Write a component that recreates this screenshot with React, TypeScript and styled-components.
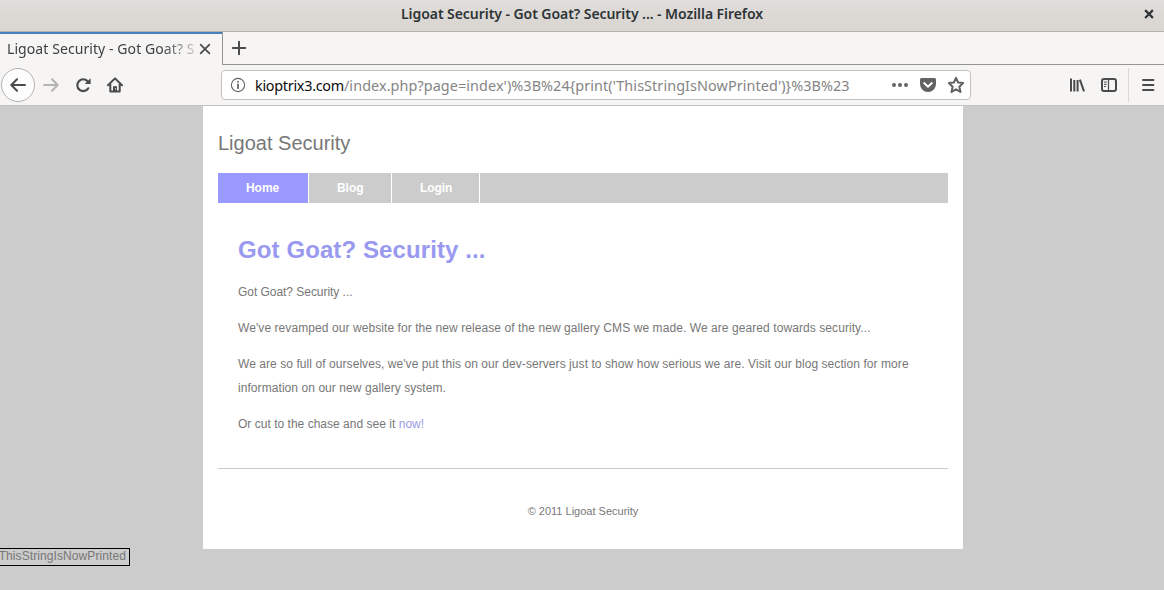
import React from "react";
import styled, { createGlobalStyle } from "styled-components";

const GlobalStyle = createGlobalStyle`
  * { box-sizing: border-box; }
  html, body { margin: 0; padding: 0; }
  body { background: #cccccc; overflow: hidden; }
`;

const Window = styled.div`
  display: flex;
  flex-direction: column;
  width: 1164px;
  height: 590px;
  overflow: hidden;
  background: #cccccc;
  font-family: "Noto Sans", sans-serif;
`;

const TitleBar = styled.header`
  display: flex;
  align-items: center;
  height: 32px;
  padding: 0 10px 4px 401px;
  background: linear-gradient(#e0ddda, #d9d5d1);
  border-bottom: 1px solid #b8b2ac;
`;

const WindowTitle = styled.span`
  flex: 1;
  color: #2e3436;
  font-size: 14px;
  font-weight: 600;
  line-height: 20px;
  letter-spacing: -0.06px;
  white-space: pre;
`;

const TabStrip = styled.div`
  display: flex;
  height: 33px;
  background: #f6f5f4;
`;

const Tab = styled.div`
  display: flex;
  align-items: center;
  width: 222px;
  padding: 0 10px 2px 7px;
  border-top: 2px solid #4a7fbf;
`;

const TabTitle = styled.span`
  width: 188px;
  color: #3b3f40;
  font-size: 14px;
  line-height: 20px;
  letter-spacing: 0.08px;
  white-space: nowrap;
  mask-image: linear-gradient(to right, #000 155px, transparent 198px);
`;

const TabClose = styled.span`
  display: flex;
  margin-left: 3px;
`;

const TabRest = styled.div`
  flex: 1;
  display: flex;
  align-items: center;
  padding-left: 8px;
  border-left: 1px solid #929594;
  border-bottom: 1px solid #929594;
`;

const Toolbar = styled.div`
  display: flex;
  align-items: center;
  height: 41px;
  padding-left: 1px;
  background: #f6f5f4;
  border-bottom: 1px solid #c4c2bf;
`;

const BackButton = styled.div`
  display: flex;
  align-items: center;
  justify-content: center;
  width: 34px;
  height: 34px;
  background: #fdfdfd;
  border: 1px solid #b3b2b0;
  border-radius: 50%;
`;

const ToolIcon = styled.div<{ $gap: number }>`
  display: flex;
  margin-left: ${(p) => p.$gap}px;
`;

const UrlBar = styled.div`
  display: flex;
  align-items: center;
  width: 750px;
  height: 30px;
  margin-left: 98px;
  padding: 0 5px 0 8px;
  background: #fff;
  border: 1px solid #c4c2c0;
  border-radius: 4px;
`;

const Url = styled.span`
  flex: 1;
  margin-left: 9px;
  padding-top: 1px;
  color: #858585;
  font-size: 14.4px;
  line-height: 20px;
  letter-spacing: 0.08px;
  white-space: nowrap;
`;

const Domain = styled.span`
  color: #0c0c0d;
  letter-spacing: -0.28px;
`;

const Separator = styled.div`
  width: 1px;
  height: 34px;
  margin-left: 11px;
  background: #dad8d6;
`;

const Viewport = styled.main`
  flex: 1;
  color: #777777;
  font-family: "Liberation Sans", Arial, sans-serif;
  font-size: 12px;
  line-height: 24px;
`;

const Page = styled.div`
  width: 760px;
  height: 443px;
  margin-left: 203px;
  padding: 22px 15px 0;
  background: #fff;
`;

const SiteName = styled.div`
  height: 45px;
  font-size: 20px;
  line-height: 30px;
`;

const Nav = styled.nav`
  display: flex;
  height: 30px;
  background: #cccccc;
`;

const NavItem = styled.a<{ $width: number; $active?: boolean }>`
  width: ${(p) => p.$width}px;
  padding-left: 28px;
  color: #fff;
  background: ${(p) => (p.$active ? "#9999ff" : "#cccccc")};
  border-right: 1px solid #fff;
  font-weight: bold;
  line-height: 30px;
  letter-spacing: -0.05px;
`;

const Article = styled.section`
  height: 266px;
  padding: 32px 20px 0;
  border-bottom: 1px solid #cccccc;
`;

const Heading = styled.h1`
  margin: 0 0 15px;
  color: #9999f0;
  font-size: 24px;
  line-height: 30px;
  letter-spacing: 0.1px;
`;

const Paragraph = styled.p<{ $tracking: number }>`
  margin: 0 0 12px;
  letter-spacing: ${(p) => p.$tracking}px;
`;

const Link = styled.a`
  color: #9c9ae6;
`;

const Footer = styled.footer`
  padding-top: 30px;
  font-size: 11px;
  text-align: center;
`;

const Printed = styled.div`
  display: flex;
  justify-content: flex-end;
  width: 130px;
  height: 18px;
  margin-top: -1px;
  padding-right: 3px;
  border: 1px solid #000;
  border-left: 0;
  line-height: 15px;
  letter-spacing: 0.09px;
  white-space: nowrap;
`;

const Stroke = ({ size = 16, width = 2, color = "#4a4b4c", children }: {
  size?: number; width?: number; color?: string; children: React.ReactNode;
}) => (
  <svg width={size} height={size} viewBox="0 0 16 16" fill="none" stroke={color}
    strokeWidth={width} strokeLinecap="round" strokeLinejoin="round">
    {children}
  </svg>
);

const paragraphs = [
  { text: "Got Goat? Security ...", tracking: -0.04 },
  { text: "We've revamped our website for the new release of the new gallery CMS we made. We are geared towards security...", tracking: 0.077 },
  { text: "We are so full of ourselves, we've put this on our dev-servers just to show how serious we are. Visit our blog section for more information on our new gallery system.", tracking: 0.067 },
];

export default function App() {
  return (
    <Window>
      <GlobalStyle />
      <TitleBar>
        <WindowTitle>Ligoat Security - Got Goat? Security ... - Mozilla Firefox</WindowTitle>
        <Stroke size={10} width={3.4} color="#2e3436"><path d="M3 3l10 10M13 3L3 13" strokeLinecap="square" /></Stroke>
      </TitleBar>

      <TabStrip>
        <Tab>
          <TabTitle>Ligoat Security - Got Goat? S</TabTitle>
          <TabClose>
            <Stroke size={14} width={2}><path d="M3 3l10 10M13 3L3 13" /></Stroke>
          </TabClose>
        </Tab>
        <TabRest>
          <Stroke><path d="M8 1.8v12.4M1.8 8h12.4" /></Stroke>
        </TabRest>
      </TabStrip>

      <Toolbar>
        <BackButton>
          <Stroke><path d="M15 8H1.5M7 2.3L1.3 8L7 13.7" /></Stroke>
        </BackButton>
        <ToolIcon $gap={8}>
          <Stroke color="#b4b4b3"><path d="M1 8h13.5M9 2.3L14.7 8L9 13.7" /></Stroke>
        </ToolIcon>
        <ToolIcon $gap={16}>
          <svg width="16" height="16" viewBox="0 0 16 16" fill="none" stroke="#4a4b4c" strokeWidth="2.2" strokeLinecap="round">
            <path d="M13.2 11.3A5.9 5.9 0 1 1 12.6 4.2" />
            <path d="M15.6 1.2v5.9H9.7z" fill="#4a4b4c" stroke="none" />
          </svg>
        </ToolIcon>
        <ToolIcon $gap={16}>
          <Stroke>
            <path d="M1 8.2L8 1.4L15 8.2M3.3 7.5V14.6H12.7V7.5" />
            <path d="M6 14.4V9.2h4v5.2z" fill="#4a4b4c" stroke="none" />
            <path d="M8.6 11.6v.5" stroke="#f6f5f4" strokeWidth="1" />
          </Stroke>
        </ToolIcon>
        <UrlBar>
          <Stroke width={1.1} color="#656565">
            <circle cx="8" cy="8" r="6.6" />
            <path d="M8 7.4v3.8" strokeWidth="1.8" />
            <path d="M8 4.7v.1" strokeWidth="1.9" />
          </Stroke>
          <Url><Domain>kioptrix3.com</Domain>{"/index.php?page=index')%3B%24{print('ThisStringIsNowPrinted')}%3B%23"}</Url>
          <svg width="18" height="16" viewBox="0 0 18 16" fill="#626262">
            <circle cx="3" cy="8" r="2" /><circle cx="9" cy="8" r="2" /><circle cx="15" cy="8" r="2" />
          </svg>
          <ToolIcon $gap={10}>
            <svg width="18" height="16" viewBox="0 0 18 16">
              <path d="M2.5 1h13a1.5 1.5 0 0 1 1.5 1.5V7A8 8 0 0 1 1 7V2.5A1.5 1.5 0 0 1 2.5 1z" fill="#626262" />
              <path d="M5.2 6.1L9 9.7L12.8 6.1" fill="none" stroke="#fff" strokeWidth="2" strokeLinecap="round" strokeLinejoin="round" />
            </svg>
          </ToolIcon>
          <ToolIcon $gap={10}>
            <Stroke size={18} width={1.8} color="#626262">
              <path d="M8 1.6L9.9 5.8L14.3 6.3L11 9.5L12 14.2L8 11.8L4 14.2L5 9.5L1.7 6.3L6.1 5.8Z" />
            </Stroke>
          </ToolIcon>
        </UrlBar>
        <ToolIcon $gap={98}>
          <Stroke><path d="M2 1.5v13M5.3 3V14.5M8.6 3V14.5M10.9 2.7L15 14.4" strokeLinecap="butt" /></Stroke>
        </ToolIcon>
        <ToolIcon $gap={16}>
          <Stroke>
            <rect x="1" y="2" width="14" height="12" rx="2" />
            <path d="M7.5 2.5v11" strokeWidth="1.2" />
            <path d="M3.4 5h2M3.4 7.3h2M3.4 9.5h1.2" strokeWidth="1" />
          </Stroke>
        </ToolIcon>
        <Separator />
        <ToolIcon $gap={11}>
          <Stroke><path d="M3 3h10.4M3 8h10.4M3 13h10.4" /></Stroke>
        </ToolIcon>
      </Toolbar>

      <Viewport>
        <Page>
          <SiteName>Ligoat Security</SiteName>
          <Nav>
            <NavItem $width={91} $active>Home</NavItem>
            <NavItem $width={83}>Blog</NavItem>
            <NavItem $width={88}>Login</NavItem>
          </Nav>
          <Article>
            <Heading>Got Goat? Security ...</Heading>
            {paragraphs.map((p) => <Paragraph key={p.text} $tracking={p.tracking}>{p.text}</Paragraph>)}
            <Paragraph $tracking={0.02}>Or cut to the chase and see it <Link>now!</Link></Paragraph>
          </Article>
          <Footer>© 2011 Ligoat Security</Footer>
        </Page>
        <Printed>ThisStringIsNowPrinted</Printed>
      </Viewport>
    </Window>
  );
}
